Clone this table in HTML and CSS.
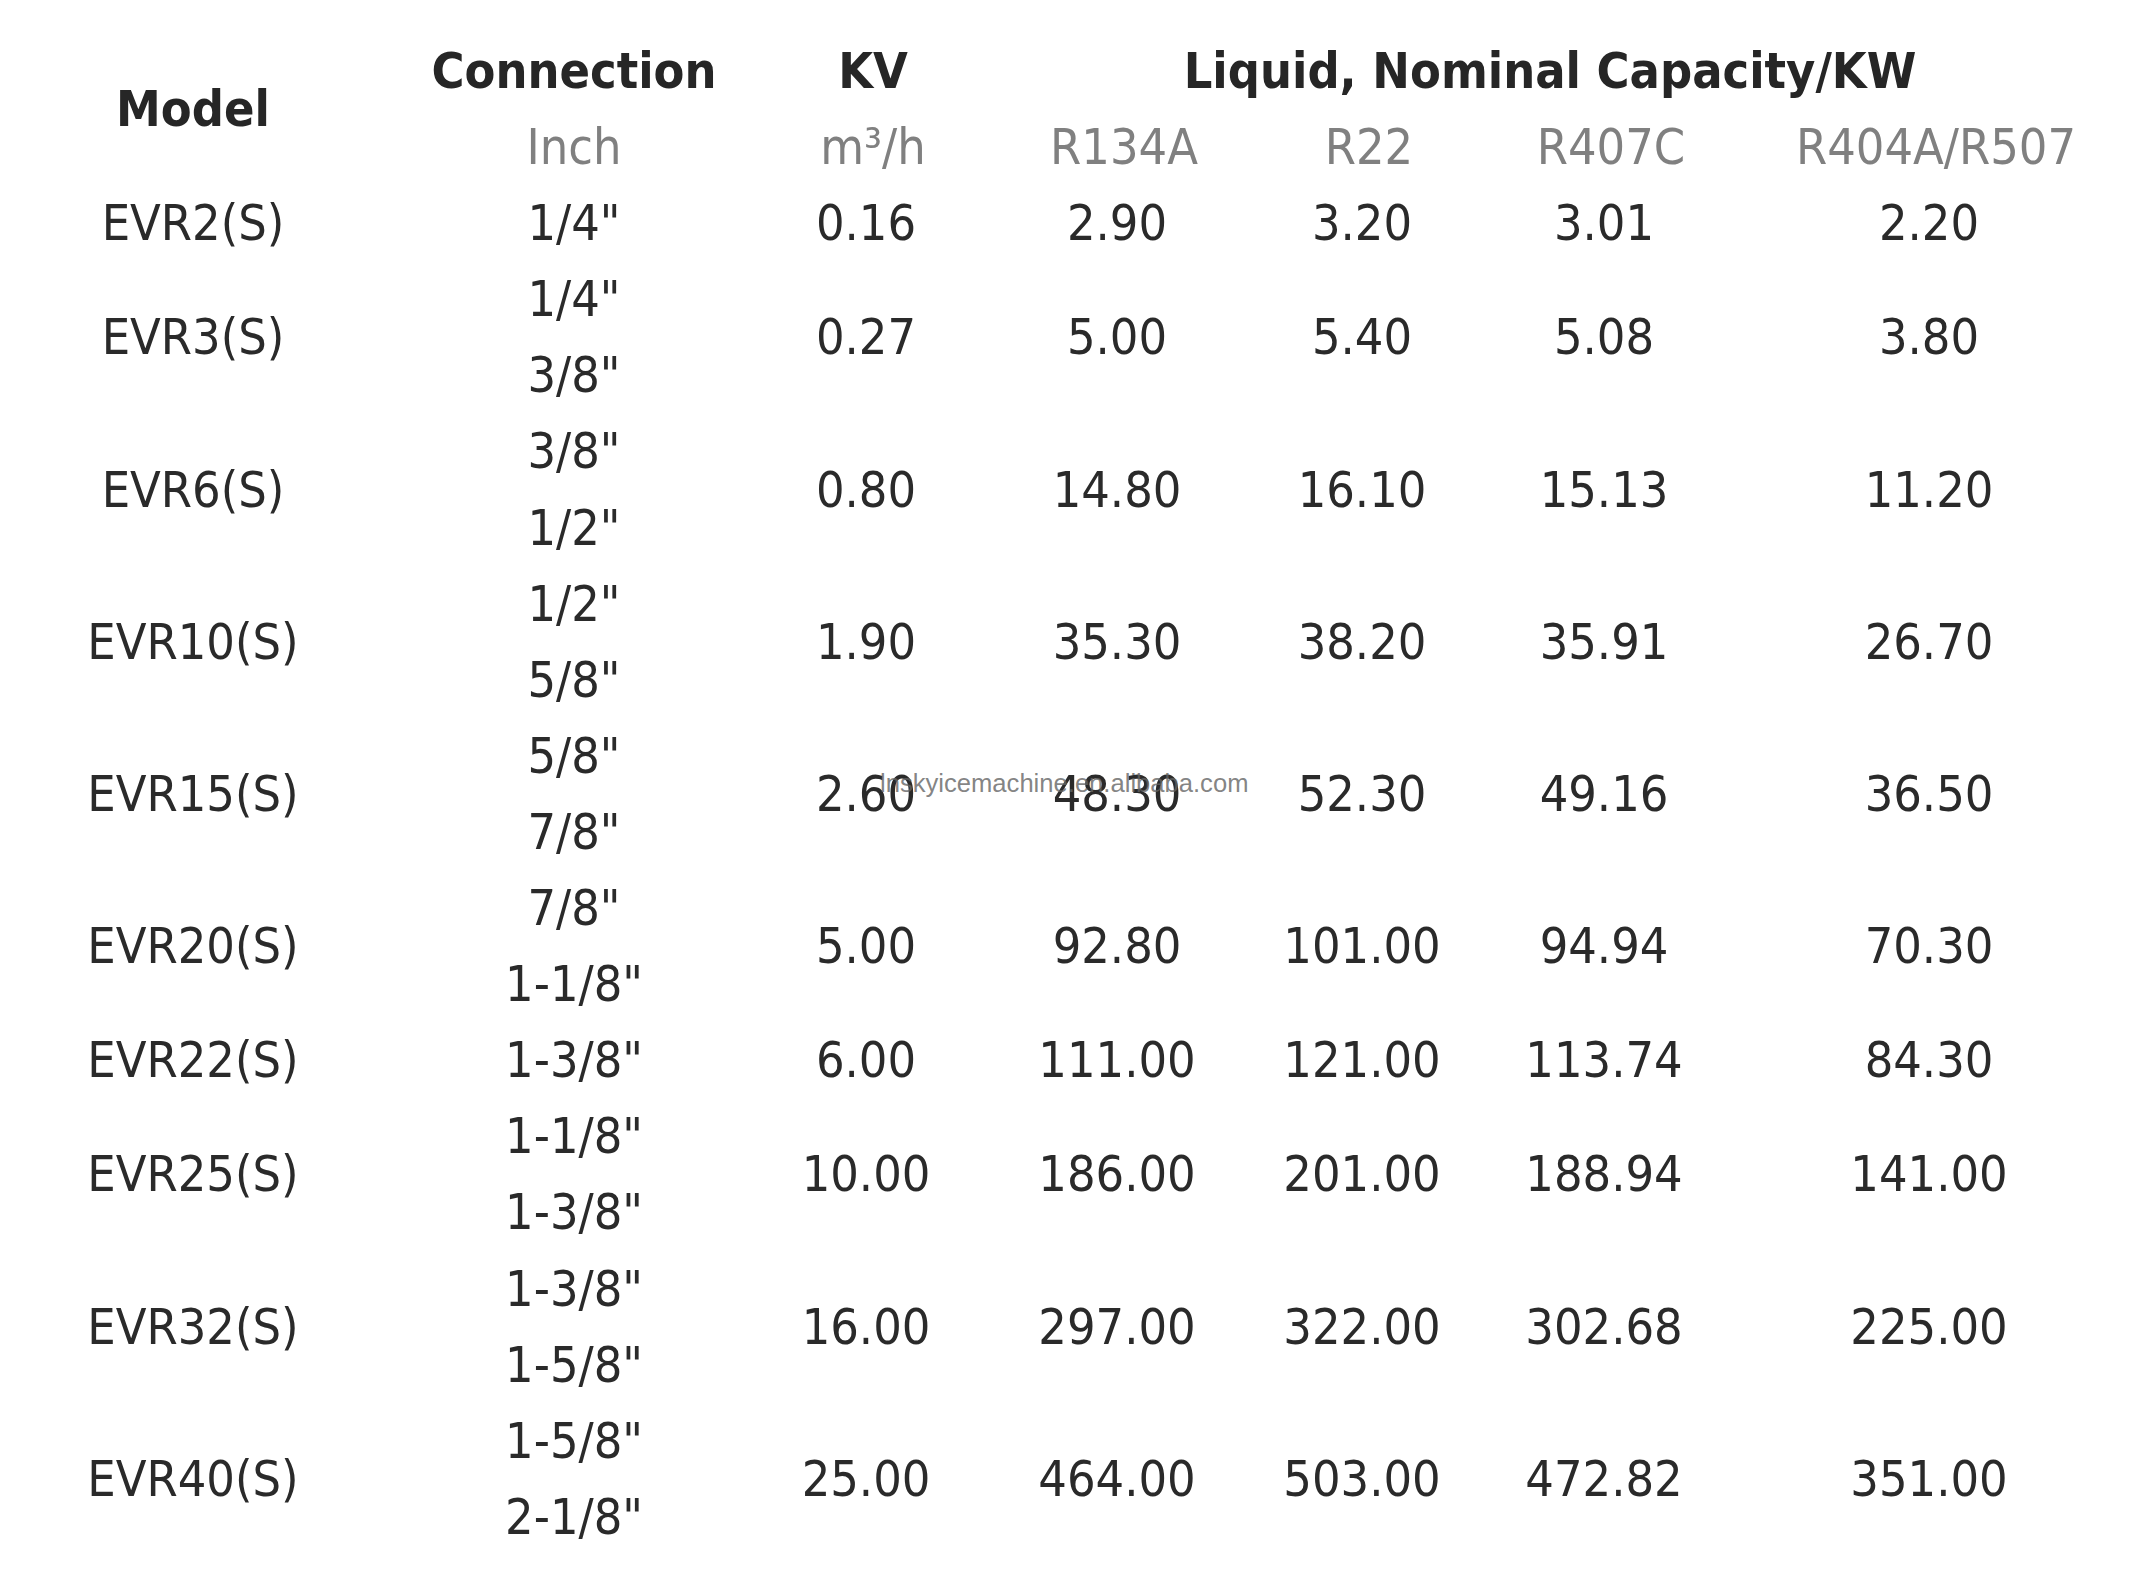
FILE: index.html
```html
<!DOCTYPE html>
<html lang="en">
<head>
<meta charset="utf-8">
<title>EVR Capacity Table</title>
<link rel="stylesheet" href="styles.css">
</head>
<body>
<div class="page">
<table class="spec">
  <colgroup>
    <col class="c-model">
    <col class="c-conn">
    <col class="c-kv">
    <col class="c-r134">
    <col class="c-r22">
    <col class="c-r407">
    <col class="c-r404">
  </colgroup>
  <thead>
    <tr>
      <th class="h-model" rowspan="2">Model</th>
      <th class="h-conn">Connection</th>
      <th class="h-main">KV</th>
      <th class="h-main h-liquid" colspan="4">Liquid, Nominal Capacity/KW</th>
    </tr>
    <tr class="sub">
      <th class="s-conn">Inch</th>
      <th>m³/h</th>
      <th>R134A</th>
      <th>R22</th>
      <th>R407C</th>
      <th>R404A/R507</th>
    </tr>
  </thead>
  <tbody>
    <tr><td>EVR2(S)</td><td class="conn">1/4"</td><td>0.16</td><td>2.90</td><td>3.20</td><td>3.01</td><td>2.20</td></tr>
    <tr><td>EVR3(S)</td><td class="conn">1/4"<br>3/8"</td><td>0.27</td><td>5.00</td><td>5.40</td><td>5.08</td><td>3.80</td></tr>
    <tr><td>EVR6(S)</td><td class="conn">3/8"<br>1/2"</td><td>0.80</td><td>14.80</td><td>16.10</td><td>15.13</td><td>11.20</td></tr>
    <tr><td>EVR10(S)</td><td class="conn">1/2"<br>5/8"</td><td>1.90</td><td>35.30</td><td>38.20</td><td>35.91</td><td>26.70</td></tr>
    <tr><td>EVR15(S)</td><td class="conn">5/8"<br>7/8"</td><td>2.60</td><td>48.30</td><td>52.30</td><td>49.16</td><td>36.50</td></tr>
    <tr><td>EVR20(S)</td><td class="conn">7/8"<br>1-1/8"</td><td>5.00</td><td>92.80</td><td>101.00</td><td>94.94</td><td>70.30</td></tr>
    <tr><td>EVR22(S)</td><td class="conn">1-3/8"</td><td>6.00</td><td>111.00</td><td>121.00</td><td>113.74</td><td>84.30</td></tr>
    <tr><td>EVR25(S)</td><td class="conn">1-1/8"<br>1-3/8"</td><td>10.00</td><td>186.00</td><td>201.00</td><td>188.94</td><td>141.00</td></tr>
    <tr><td>EVR32(S)</td><td class="conn">1-3/8"<br>1-5/8"</td><td>16.00</td><td>297.00</td><td>322.00</td><td>302.68</td><td>225.00</td></tr>
    <tr><td>EVR40(S)</td><td class="conn">1-5/8"<br>2-1/8"</td><td>25.00</td><td>464.00</td><td>503.00</td><td>472.82</td><td>351.00</td></tr>
  </tbody>
</table>
<div class="watermark">lnskyicemachine.en.alibaba.com</div>
</div>
</body>
</html>
```

FILE: styles.css
```css
html, body {
  margin: 0;
  padding: 0;
  background: #ffffff;
}

.page {
  position: relative;
  width: 2131px;
  height: 1576px;
  overflow: hidden;
  padding-top: 33px;
  box-sizing: border-box;
}

.spec {
  border-collapse: collapse;
  border-spacing: 0;
  table-layout: fixed;
  width: 2110px;
  font-family: "DejaVu Sans Condensed", "DejaVu Sans", sans-serif;
  font-stretch: condensed;
  font-size: 50px;
  line-height: 76.1px;
  color: #2a2a2a;
}

.c-model { width: 386px; }
.c-conn { width: 376px; }
.c-kv { width: 208px; }
.c-r134 { width: 294px; }
.c-r22 { width: 196px; }
.c-r407 { width: 288px; }
.c-r404 { width: 362px; }

.spec th,
.spec td {
  padding: 0;
  text-align: center;
  vertical-align: middle;
  white-space: nowrap;
  height: 76.1px;
}

.spec th {
  font-weight: bold;
  color: #262626;
}

.spec .h-main {
  padding-left: 14px;
}

.spec .h-liquid {
  padding-left: 20px;
}

.spec .sub th {
  font-weight: normal;
  color: #808080;
  padding-left: 14px;
}

.spec .sub th.s-conn {
  padding-left: 0;
}

.watermark {
  position: absolute;
  left: 880px;
  top: 768px;
  font-family: "Liberation Sans", Arial, sans-serif;
  font-size: 25.6px;
  line-height: 30px;
  color: rgba(100, 100, 100, 0.8);
  white-space: nowrap;
}
```
